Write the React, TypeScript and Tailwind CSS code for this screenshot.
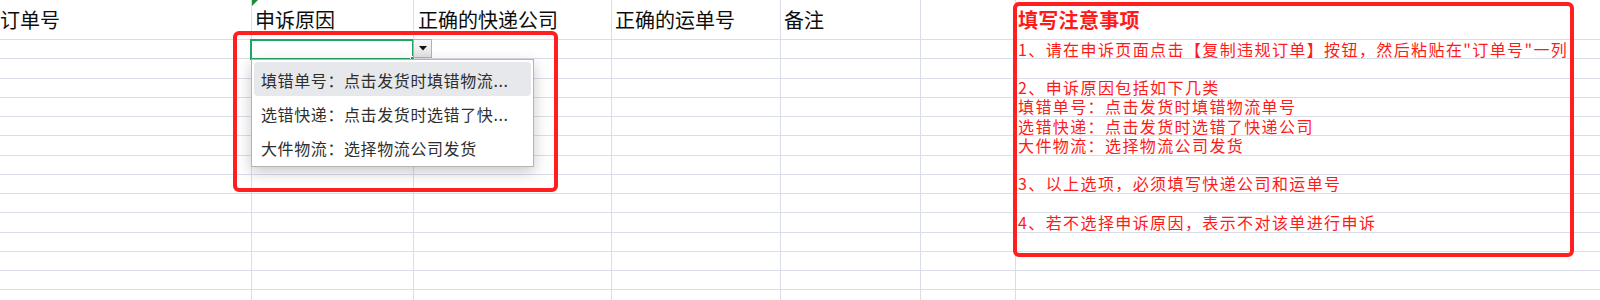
import React from "react";

const ROWS = Array.from({ length: 14 }, (_, i) => i);

const NOTES: string[] = [
  "1、请在申诉页面点击【复制违规订单】按钮，然后粘贴在\"订单号\"一列",
  "",
  "2、申诉原因包括如下几类",
  "填错单号：点击发货时填错物流单号",
  "选错快递：点击发货时选错了快递公司",
  "大件物流：选择物流公司发货",
  "",
  "3、以上选项，必须填写快递公司和运单号",
  "",
  "4、若不选择申诉原因，表示不对该单进行申诉",
  "",
  "",
  "",
  "",
];

function Col({ className }: { className: string }) {
  return (
    <div className={className}>
      {ROWS.map((r) => (
        <div key={r} className="h-[19.28px] border-b border-[#d9dee9]" />
      ))}
    </div>
  );
}

function HeaderCell({ className, children }: { className: string; children?: React.ReactNode }) {
  return (
    <div className={className}>
      <span className="whitespace-nowrap text-[20px] leading-none text-[#0d0d0d]">{children}</span>
    </div>
  );
}

export default function App() {
  return (
    <div className="relative h-[300px] w-[1600px] overflow-hidden bg-white font-['Noto_Sans_CJK_SC',sans-serif]">
      {/* header row */}
      <div className="flex h-[40px] border-b border-[#d9dee9]">
        <HeaderCell className="flex w-[252px] shrink-0 items-center border-r border-[#d9dee9] pl-0">订单号</HeaderCell>
        <HeaderCell className="relative flex w-[162px] shrink-0 items-center border-r border-[#d9dee9] pl-[3px]">
          申诉原因
        </HeaderCell>
        <HeaderCell className="flex w-[198px] shrink-0 items-center border-r border-[#d9dee9] pl-[4px]">正确的快递公司</HeaderCell>
        <HeaderCell className="flex w-[169px] shrink-0 items-center border-r border-[#d9dee9] pl-[3px]">正确的运单号</HeaderCell>
        <HeaderCell className="flex w-[140px] shrink-0 items-center border-r border-[#d9dee9] pl-[3px]">备注</HeaderCell>
        <div className="w-[95px] shrink-0 border-r border-[#d9dee9]" />
        <div className="flex flex-1 items-center pl-[2px]">
          <span className="whitespace-nowrap text-[20px] font-bold leading-none tracking-[0.3px] text-[#ff1a1a]">填写注意事项</span>
        </div>
      </div>

      {/* body rows */}
      <div className="flex">
        <Col className="w-[252px] shrink-0 border-r border-[#d9dee9]" />
        <Col className="w-[162px] shrink-0 border-r border-[#d9dee9]" />
        <Col className="w-[198px] shrink-0 border-r border-[#d9dee9]" />
        <Col className="w-[169px] shrink-0 border-r border-[#d9dee9]" />
        <Col className="w-[140px] shrink-0 border-r border-[#d9dee9]" />
        <Col className="w-[95px] shrink-0 border-r border-[#d9dee9]" />
        <div className="flex-1">
          {ROWS.map((r) => (
            <div
              key={r}
              className="h-[19.28px] whitespace-nowrap border-b border-[#d9dee9] pl-[2px] pt-[0.5px] text-[16px] leading-[17.5px] tracking-[1.4px] text-[#ff1a1a]"
            >
              {NOTES[r]}
            </div>
          ))}
        </div>
      </div>

      {/* error-indicator triangle */}
      <svg className="absolute left-[252px] top-0" width="6" height="6" viewBox="0 0 6 6">
        <polygon points="0,0 6,0 0,6" fill="#1d8a3c" />
      </svg>

      {/* selected cell */}
      <div className="absolute left-[250px] top-[38.5px] h-[21.5px] w-[164px] border-2 border-[#21a366]" />
      <div className="absolute left-[410px] top-[56px] h-[5px] w-[5px] border border-white bg-[#21a366]" />

      {/* dropdown button */}
      <div className="absolute left-[413px] top-[39px] flex h-[18.5px] w-[19px] items-center justify-center border border-[#a9b3c4] bg-gradient-to-b from-[#f7f7f7] to-[#e3e3e3]">
        <svg width="8" height="5" viewBox="0 0 8 5">
          <polygon points="0,0 8,0 4,4.5" fill="#111" />
        </svg>
      </div>

      {/* dropdown menu */}
      <div className="absolute left-[251px] top-[59px] w-[283px] border border-[#b4b4b4] bg-white px-[2px] py-[2px] text-[16px] tracking-[0.6px] text-[#2e2e2e] shadow-[0_5px_14px_rgba(0,0,0,0.22)]">
        <div className="flex h-[34px] items-center rounded-[4px] bg-[#e6e8ec] pl-[7px] pt-[2px]">填错单号：点击发货时填错物流...</div>
        <div className="flex h-[34px] items-center pl-[7px] pt-[2px]">选错快递：点击发货时选错了快...</div>
        <div className="flex h-[34px] items-center pl-[7px] pt-[2px]">大件物流：选择物流公司发货</div>
      </div>

      {/* red annotation boxes */}
      <div className="absolute left-[233px] top-[31px] h-[161px] w-[325px] rounded-[6px] border-4 border-[#ff1f1f]" />
      <div className="absolute left-[1013px] top-[2px] h-[255px] w-[561px] rounded-[6px] border-4 border-[#ff1f1f]" />
    </div>
  );
}
